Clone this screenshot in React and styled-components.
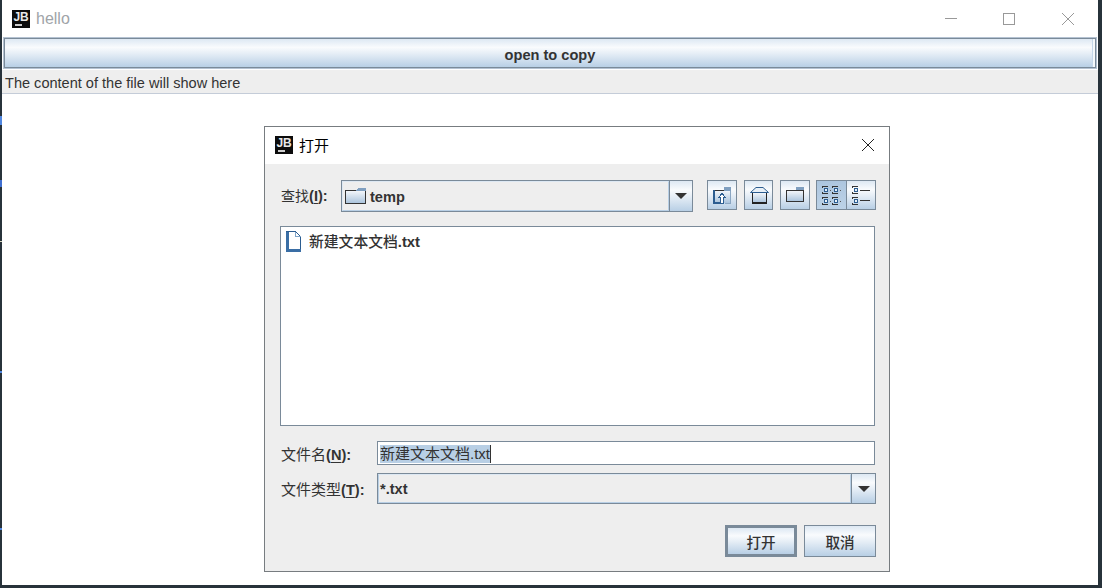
import React from "react";
import styled, { createGlobalStyle, css } from "styled-components";

const Global = createGlobalStyle`
  html, body { margin: 0; padding: 0; width: 1102px; height: 588px; overflow: hidden; background: #27323a; }
  * { box-sizing: border-box; }
  body { font-family: "Liberation Sans", "Noto Sans CJK SC", sans-serif; font-size: 14.6px; color: #333333; }
`;

const metal = css`
  background: linear-gradient(180deg, #dde8f3 0%, #f9fbfd 30%, #e3ecf5 55%, #b8cfe5 100%);
`;

const Desktop = styled.div`
  width: 1102px;
  height: 588px;
  padding: 0 4px 3px 2px;
  display: flex;
  background-color: #27323a;
  background-image: linear-gradient(
    180deg,
    transparent 116px, #4f86e0 116px, #4f86e0 125px, transparent 125px,
    transparent 180px, #3f6fd0 180px, #3f6fd0 187px, transparent 187px,
    transparent 241px, #d8d8c0 241px, #d8d8c0 242px, transparent 242px,
    transparent 371px, #4f86e0 371px, #4f86e0 373px, transparent 373px,
    transparent 528px, #4f86e0 528px, #4f86e0 530px, transparent 530px
  );
  background-size: 2px 100%;
  background-repeat: no-repeat;
`;

const Window = styled.div`
  position: relative;
  flex: 1;
  background: #ffffff;
  display: flex;
  flex-direction: column;
`;

const TitleBar = styled.div`
  height: 37px;
  flex: none;
  display: flex;
  align-items: center;
  padding: 0 1px 0 10px;
  gap: 6px;
  background: #ffffff;
`;

const AppTitle = styled.span`
  font-size: 16px;
  color: #a0a4a8;
`;

const Logo = styled.div`
  width: 18px;
  height: 18px;
  flex: none;
  background: #0c0c0c;
  position: relative;
  color: #e8e8e8;
  font: 700 12px/12px "Liberation Sans", sans-serif;
  text-align: center;
  padding-top: 1px;
  letter-spacing: -0.2px;
  &::after {
    content: "";
    position: absolute;
    left: 3px;
    bottom: 2px;
    width: 7px;
    height: 2px;
    background: #ccc;
  }
`;

const WindowControls = styled.div`
  margin-left: auto;
  display: flex;
`;

const ControlBtn = styled.div`
  width: 58.5px;
  height: 37px;
  display: flex;
  align-items: center;
  justify-content: center;
`;

const MainButton = styled.button`
  ${metal}
  flex: none;
  height: 30px;
  margin: 1px 2px;
  border: 1px solid #7a8a99;
  box-shadow: 0 0 0 1px #b4c2d2, inset -2px 0 0 #f4f8fb, inset -3px 0 0 #c4d6e8;
  font: 700 14.6px "Liberation Sans", sans-serif;
  color: #333333;
  padding: 3px 0 0;
`;

const StatusLabel = styled.div`
  flex: none;
  height: 24px;
  margin-top: 1px;
  padding: 1px 3px 0;
  background: #eeeeee;
  border-bottom: 1px solid #c4ccd8;
  font-size: 14.55px;
  line-height: 24px;
  color: #333333;
`;

const Dialog = styled.div`
  position: absolute;
  left: 262px;
  top: 126px;
  width: 626px;
  height: 446px;
  border: 1px solid #777c80;
  background: #eeeeee;
  display: flex;
  flex-direction: column;
`;

const DialogTitle = styled.div`
  height: 37px;
  flex: none;
  background: #ffffff;
  display: flex;
  align-items: center;
  padding: 0 15px 1px 10px;
  gap: 6px;
  color: #000;
`;

const DialogCaption = styled.span`
  font-size: 15px;
  margin-bottom: 2px;
`;

const DialogBody = styled.div`
  flex: 1;
  display: flex;
  flex-direction: column;
  padding: 16px 13px 14px 15px;
`;

const TopRow = styled.div`
  display: flex;
  align-items: flex-start;
  height: 32px;
`;

const FieldLabel = styled.label`
  font-weight: 700;
  font-size: 14.6px;
  color: #333333;
  flex: none;
  width: ${(p) => p.$w}px;
  margin-left: 1px;
  line-height: ${(p) => p.$h}px;
  white-space: nowrap;
  u { text-underline-offset: 2px; }
`;

const ZhLabel = styled.span`
  font-weight: 400;
  font-size: ${(p) => p.$size || 15}px;
`;

const LookIn = styled.div`
  width: 352px;
  height: 32px;
  flex: none;
  display: flex;
  border: 1px solid #7a8a99;
  background: #eeeeee;
`;

const LookInValue = styled.div`
  flex: 1;
  display: flex;
  align-items: center;
  gap: 4px;
  padding-left: 2px;
  font-weight: 700;
  border: 1px solid #dde8f3;
  border-right-color: #b8cfe5;
  border-bottom-color: #b8cfe5;
  background: #eeeeee;
`;

const FolderName = styled.span`
  margin-top: 2px;
`;

const Arrow = styled.div`
  ${metal}
  width: ${(p) => p.$w}px;
  flex: none;
  display: flex;
  align-items: center;
  justify-content: center;
  border-left: 1px solid #7a8a99;
  &::before {
    content: "";
    border-left: 6px solid transparent;
    border-right: 6px solid transparent;
    border-top: 6px solid #333;
  }
`;

const ToolGroup = styled.div`
  display: flex;
  margin-left: ${(p) => p.$ml}px;
`;

const ToolButton = styled.div`
  width: ${(p) => p.$w || 30}px;
  height: 30px;
  display: flex;
  align-items: center;
  justify-content: center;
  border: 1px solid #7a8a99;
  ${(p) => (p.$active ? "background: linear-gradient(180deg, #adc6df, #bcd2e7);" : metal)}
  ${(p) => p.$joined && "margin-left: -1px;"}
`;

const FileList = styled.div`
  margin-top: 14px;
  width: 595px;
  height: 200px;
  flex: none;
  background: #ffffff;
  border: 1px solid #7a8a99;
  padding: 4px;
`;

const FileItem = styled.div`
  display: flex;
  align-items: flex-start;
  gap: 7px;
  height: 22px;
`;

const FileName = styled.span`
  font-weight: 700;
  font-size: 14.8px;
  line-height: 20px;
  margin-top: 1px;
`;

const ZhName = styled.span`
  font-weight: 500;
`;

const FileRow = styled.div`
  display: flex;
  margin-top: ${(p) => p.$mt}px;
  align-items: flex-start;
`;

const NameInput = styled.div`
  width: 498px;
  height: 24px;
  background: #fff;
  border: 1px solid #7a8a99;
  padding: 3px 2px 0;
  display: flex;
`;

const Selected = styled.span`
  background: #b8cfe5;
  height: 18px;
  line-height: 18px;
  font-size: 15px;
  border-right: 1px solid #333;
  white-space: nowrap;
`;

const TypeCombo = styled.div`
  width: 499px;
  height: 31px;
  display: flex;
  border: 1px solid #7a8a99;
`;

const TypeValue = styled.div`
  flex: 1;
  background: #eeeeee;
  border: 1px solid #fff;
  border-color: #dde8f3 #b8cfe5 #b8cfe5 #b8cfe5;
  padding-left: 1px;
  font-weight: 700;
  line-height: 29px;
`;

const Actions = styled.div`
  margin-top: 18px;
  display: flex;
  justify-content: flex-end;
  gap: 7px;
`;

const ActionButton = styled.button`
  ${metal}
  width: 72px;
  height: 32px;
  padding: 0;
  font: 500 14.6px "Liberation Sans", "Noto Sans CJK SC", sans-serif;
  color: #333;
  border: ${(p) => (p.$default ? "3px" : "1px")} solid #7a8a99;
`;

const I = ({ children, w = 20, h = 20 }) => (
  <svg width={w} height={h} viewBox={`0 0 ${w} ${h}`} fill="none" shapeRendering="crispEdges">
    {children}
  </svg>
);

const Grad = ({ id }) => (
  <defs>
    <linearGradient id={id} x1="0" y1="0" x2="0" y2="1">
      <stop offset="0" stopColor="#f6f8fb" />
      <stop offset="1" stopColor="#a9c3dc" />
    </linearGradient>
  </defs>
);

const FolderIcon = () => (
  <I w={21} h={18}>
    <Grad id="fa" />
    <path d="M.5 3.5h20v13H.5z" fill="url(#fa)" stroke="#333" />
    <path d="M11 3l2-2h8v3h-10z" fill="#7f9fc0" />
  </I>
);

const UpFolderIcon = () => (
  <I>
    <Grad id="fb" />
    <path d="M1 5h18v13H1z" fill="url(#fb)" />
    <path d="M3 5.5h10" stroke="#333" />
    <path d="M12 2h7v4h-7z" fill="#7f9fc0" />
    <path d="M1 5h2v14H1zM1 17h7v2H1z" fill="#2c5d90" />
    <path d="M13 18.5h6M18.5 6v12" stroke="#8aa6c2" />
    <path d="M10 8.5 6.5 12.5H8.5V18.5H11.5V12.5H13.5z" fill="#fff" stroke="#2c5d90" />
  </I>
);

const NewFolderIcon = () => (
  <I>
    <Grad id="fc" />
    <path d="M1.5 5.5h17v11h-17z" fill="url(#fc)" stroke="#333" />
    <path d="M11 2h8v3h-8z" fill="#7f9fc0" />
  </I>
);

const HomeIcon = () => (
  <I w={21}>
    <Grad id="fd" />
    <path d="M4.5 7.5h14v10h-14z" fill="url(#fd)" stroke="#222" />
    <path d="M4 18.5h15" stroke="#222" />
    <path d="M2.5 7.5 8 2.5h7l5.5 5H2.5z" stroke="#2c5d90" fill="#e8f0f7" shapeRendering="auto" />
  </I>
);

const Mini = ({ x, y }) => (
  <>
    <path d={`M${x} ${y + 0.5}h6M${x} ${y + 7.5}h6`} stroke="#333" />
    <path d={`M${x + 0.5} ${y + 1}v1M${x + 0.5} ${y + 6}v1`} stroke="#333" />
    <path d={`M${x + 2.5} ${y + 2.5}h3v3h-3z`} fill="#e8f0f7" stroke="#2c5d90" />
  </>
);

const GridIcon = () => (
  <I w={21}>
    {[1, 11].map((x) =>
      [1, 12].map((y) => (
        <g key={`${x}-${y}`}>
          <Mini x={x} y={y} />
          <path d={`M${x + 8} ${y + 4}h1v1h-1z`} fill="#555" />
        </g>
      ))
    )}
  </I>
);

const ListIcon = () => (
  <I>
    {[1, 12].map((y) => (
      <g key={y}>
        <Mini x={1} y={y} />
      </g>
    ))}
    <path d="M9 5.5h10M9 15.5h10" stroke="#333" />
  </I>
);

const DocIcon = () => (
  <I w={17} h={22}>
    <path d="M1.5 .5h9l5 5v15h-14z" fill="#fff" stroke="#2c5d90" />
    <path d="M1 1h3v19H1zM1 18h15v3H1z" fill="#3a6ea5" />
    <path d="M10.5 .5v5h5" stroke="#7fa3c7" />
  </I>
);

export default function App() {
  return (
    <>
      <Global />
      <Desktop>
        <Window>
          <TitleBar>
            <Logo>JB</Logo>
            <AppTitle>hello</AppTitle>
            <WindowControls>
              <ControlBtn>
                <svg width="12" height="12" viewBox="0 0 12 12" shapeRendering="crispEdges"><path d="M0 5.5h12" stroke="#999" /></svg>
              </ControlBtn>
              <ControlBtn>
                <svg width="12" height="12" viewBox="0 0 12 12" shapeRendering="crispEdges"><path d="M.5.5h11v11H.5z" stroke="#999" fill="none" /></svg>
              </ControlBtn>
              <ControlBtn>
                <svg width="12" height="12" viewBox="0 0 12 12"><path d="M0 0l12 12M12 0L0 12" stroke="#999" fill="none" /></svg>
              </ControlBtn>
            </WindowControls>
          </TitleBar>
          <MainButton>open to copy</MainButton>
          <StatusLabel>The content of the file will show here</StatusLabel>

          <Dialog>
            <DialogTitle>
              <Logo>JB</Logo>
              <DialogCaption>打开</DialogCaption>
              <WindowControls>
                <svg width="12" height="12" viewBox="0 0 12 12"><path d="M0 0l12 12M12 0L0 12" stroke="#222" fill="none" /></svg>
              </WindowControls>
            </DialogTitle>
            <DialogBody>
              <TopRow>
                <FieldLabel $w={60} $h={32}><ZhLabel $size={14}>查找</ZhLabel>(<u>I</u>):</FieldLabel>
                <LookIn>
                  <LookInValue><FolderIcon /><FolderName>temp</FolderName></LookInValue>
                  <Arrow $w={23} />
                </LookIn>
                <ToolGroup $ml={14}><ToolButton><UpFolderIcon /></ToolButton></ToolGroup>
                <ToolGroup $ml={7}><ToolButton $w={29}><HomeIcon /></ToolButton></ToolGroup>
                <ToolGroup $ml={7}><ToolButton><NewFolderIcon /></ToolButton></ToolGroup>
                <ToolGroup $ml={6}>
                  <ToolButton $w={31} $active><GridIcon /></ToolButton>
                  <ToolButton $w={30} $joined><ListIcon /></ToolButton>
                </ToolGroup>
              </TopRow>
              <FileList>
                <FileItem><DocIcon /><FileName><ZhName>新建文本文档</ZhName>.txt</FileName></FileItem>
              </FileList>
              <FileRow $mt={15}>
                <FieldLabel $w={96} $h={28}><ZhLabel>文件名</ZhLabel>(<u>N</u>):</FieldLabel>
                <NameInput><Selected>新建文本文档.txt</Selected></NameInput>
              </FileRow>
              <FileRow $mt={4}>
                <FieldLabel $w={96} $h={33}><ZhLabel>文件类型</ZhLabel>(<u>T</u>):</FieldLabel>
                <TypeCombo>
                  <TypeValue>*.txt</TypeValue>
                  <Arrow $w={24} />
                </TypeCombo>
              </FileRow>
              <Actions>
                <ActionButton $default>打开</ActionButton>
                <ActionButton>取消</ActionButton>
              </Actions>
            </DialogBody>
          </Dialog>
        </Window>
      </Desktop>
    </>
  );
}
